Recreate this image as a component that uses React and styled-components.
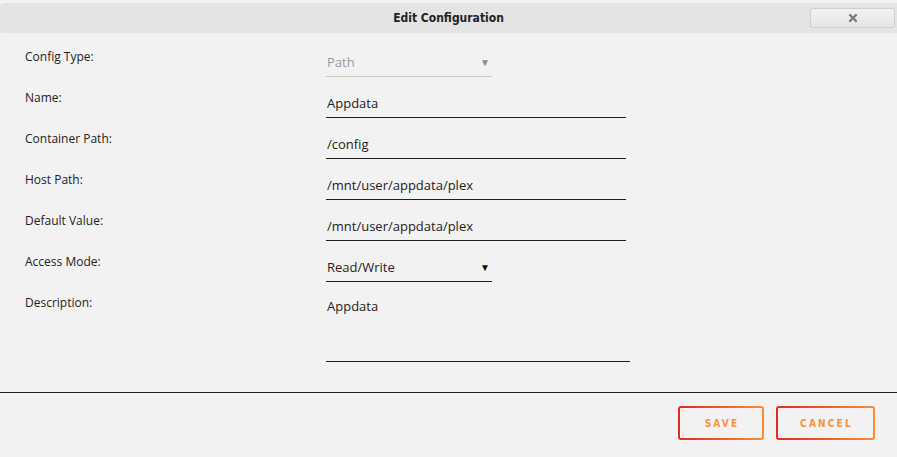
import React from 'react'
import styled, { createGlobalStyle } from 'styled-components'
import { FaTimes } from 'react-icons/fa'

const GlobalStyle = createGlobalStyle`
  html, body {
    margin: 0;
    padding: 0;
    background: #f2f2f2;
  }
  body {
    font-family: "Open Sans", "Liberation Sans", sans-serif;
    color: #222;
  }
`

const Dialog = styled.div`
  width: 897px;
  height: 457px;
  padding-top: 3px;
  box-sizing: border-box;
  background: #f2f2f2;
  display: flex;
  flex-direction: column;
  overflow: hidden;
`

const TitleBar = styled.div`
  height: 30px;
  background: #e4e4e4;
  border-radius: 4px 0 0 4px;
  display: flex;
  align-items: center;
  justify-content: center;
  position: relative;
`

const Title = styled.h1`
  margin: 0;
  font-family: "DejaVu Sans Condensed", "Liberation Sans Narrow", sans-serif;
  font-size: 12px;
  font-weight: bold;
  color: #222;
`

const CloseButton = styled.button`
  position: absolute;
  right: 2px;
  top: 5px;
  width: 85px;
  height: 20px;
  border: 1px solid #cfcfcf;
  border-radius: 3px;
  background: linear-gradient(#f2f2f2, #e6e6e6);
  display: flex;
  align-items: center;
  justify-content: center;
  color: #7a7a7a;
  padding: 0;
`

const Form = styled.div`
  padding: 15px 0 0 25px;
  flex: 1;
`

const Row = styled.div`
  display: grid;
  grid-template-columns: 301px 1fr;
  align-items: start;
  margin-bottom: 12px;
`

const Label = styled.label`
  font-size: 12px;
  line-height: 20px;
  color: #222;
  margin-top: -1px;
`

const Field = styled.div`
  width: ${(p) => p.$width}px;
  height: ${(p) => p.$height || 29}px;
  box-sizing: border-box;
  border-bottom: 1px solid ${(p) => (p.$muted ? '#c8c8c8' : '#1e1e1e')};
  display: flex;
  align-items: ${(p) => (p.$top ? 'flex-start' : 'center')};
  justify-content: space-between;
  padding: ${(p) => (p.$top ? '4px 0 0 1px' : '0 0 0 1px')};
  font-size: 13px;
  line-height: 16px;
  color: ${(p) => (p.$muted ? '#9a9a9a' : '#222')};
`

const Arrow = styled.span`
  font-size: 10px;
  margin-right: 2px;
  color: ${(p) => (p.$muted ? '#8a8a8a' : '#111')};
`

const Footer = styled.div`
  border-top: 1px solid #1e1e1e;
  height: 65px;
  box-sizing: border-box;
  display: flex;
  justify-content: flex-end;
  align-items: flex-start;
  gap: 12px;
  padding: 13px 22px 0 0;
`

const ActionButton = styled.button`
  width: ${(p) => p.$width}px;
  height: 34px;
  border: 2px solid transparent;
  border-radius: 3px;
  background:
    linear-gradient(#f2f2f2, #f2f2f2) padding-box,
    linear-gradient(90deg, #e22828, #ff8c2f) border-box;
  font-family: "DejaVu Sans Condensed", "Liberation Sans Narrow", sans-serif;
  font-size: 10px;
  font-weight: bold;
  letter-spacing: 2.2px;
  color: #f7913f;
  padding: 0 0 0 2px;
`

const rows = [
  { label: 'Config Type:', value: 'Path', width: 166, select: true, muted: true },
  { label: 'Name:', value: 'Appdata', width: 300 },
  { label: 'Container Path:', value: '/config', width: 300 },
  { label: 'Host Path:', value: '/mnt/user/appdata/plex', width: 300 },
  { label: 'Default Value:', value: '/mnt/user/appdata/plex', width: 300 },
  { label: 'Access Mode:', value: 'Read/Write', width: 166, select: true },
  { label: 'Description:', value: 'Appdata', width: 304, height: 68, top: true },
]

const App = () => {
  return (
    <>
      <GlobalStyle />
      <Dialog>
        <TitleBar>
          <Title>Edit Configuration</Title>
          <CloseButton>
            <FaTimes size={12} />
          </CloseButton>
        </TitleBar>
        <Form>
          {rows.map((row) => (
            <Row key={row.label}>
              <Label>{row.label}</Label>
              <Field
                $width={row.width}
                $height={row.height}
                $muted={row.muted}
                $top={row.top}
              >
                <span>{row.value}</span>
                {row.select && <Arrow $muted={row.muted}>▼</Arrow>}
              </Field>
            </Row>
          ))}
        </Form>
        <Footer>
          <ActionButton $width={86}>SAVE</ActionButton>
          <ActionButton $width={99}>CANCEL</ActionButton>
        </Footer>
      </Dialog>
    </>
  )
}

export default App
